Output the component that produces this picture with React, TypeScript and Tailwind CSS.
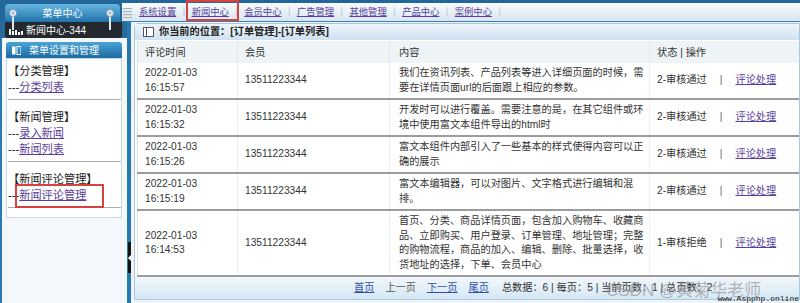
import React from "react";

const rows = [
  {
    date: "2022-01-03",
    time: "16:15:57",
    member: "13511223344",
    lines: ["我们在资讯列表、产品列表等进入详细页面的时候，需", "要在详情页面url的后面跟上相应的参数。"],
    status: "2-审核通过",
  },
  {
    date: "2022-01-03",
    time: "16:15:32",
    member: "13511223344",
    lines: ["开发时可以进行覆盖。需要注意的是，在其它组件或环", "境中使用富文本组件导出的html时"],
    status: "2-审核通过",
  },
  {
    date: "2022-01-03",
    time: "16:15:26",
    member: "13511223344",
    lines: ["富文本组件内部引入了一些基本的样式使得内容可以正", "确的展示"],
    status: "2-审核通过",
  },
  {
    date: "2022-01-03",
    time: "16:15:19",
    member: "13511223344",
    lines: ["富文本编辑器，可以对图片、文字格式进行编辑和混", "排。"],
    status: "2-审核通过",
  },
  {
    date: "2022-01-03",
    time: "16:14:53",
    member: "13511223344",
    lines: [
      "首页、分类、商品详情页面，包含加入购物车、收藏商",
      "品、立即购买、用户登录、订单管理、地址管理；完整",
      "的购物流程，商品的加入、编辑、删除、批量选择，收",
      "货地址的选择，下单、会员中心",
    ],
    status: "1-审核拒绝",
  },
];

const tabs = ["系统设置", "新闻中心", "会员中心", "广告管理", "其他管理", "产品中心", "案例中心"];

function Pin() {
  return (
    <svg width="8" height="22" viewBox="0 0 8 22">
      <rect x="3" y="6" width="2" height="16" fill="#dfeaf2" />
      <circle cx="4" cy="5" r="3.5" fill="#e8eef3" stroke="#7f98ab" strokeWidth="0.8" />
      <circle cx="4" cy="5" r="1.4" fill="#9fb3c2" />
    </svg>
  );
}

function Section({ title, links, first, boxed }: { title: string; links: string[]; first?: boolean; boxed?: string }) {
  return (
    <div className={`${first ? "pt-[4px]" : "pt-[9px]"} pb-[4px] border-b border-[#a9aeb2] leading-[16px] text-[11.2px] text-[#222]`}>
      <div>{title}</div>
      {links.map((l) => (
        <div key={l} className="relative">
          ---<a className="text-[#5b3f9c] underline">{l}</a>
          {boxed === l && (
            <div className="absolute left-[7px] top-[-3px] w-[89px] h-[24px] border-2 border-[#d6423e]" />
          )}
        </div>
      ))}
    </div>
  );
}

export default function App() {
  return (
    <div className="relative w-[800px] h-[303px] overflow-hidden flex flex-col bg-[#23669a] font-['Liberation_Sans','Noto_Sans_CJK_SC',sans-serif]">
      {/* 顶部 */}
      <div className="flex h-[22px]">
        <div className="w-[122px] pl-[5px] pt-[4px]">
          <div className="h-[18px] w-[115px] rounded-t-[4px] bg-gradient-to-b from-[#66b6e2] to-[#1f73aa] text-white text-[10px] flex items-center justify-center">
            菜单中心
          </div>
        </div>
        <div className="flex-1 mt-[3px] bg-gradient-to-b from-[#f8fbfd] to-[#d8e6f1] border-b border-[#3a80b3] flex items-center text-[9.3px]">
          <svg width="9" height="11" viewBox="0 0 9 11" className="ml-[1px] mr-[1.5px]">
            <rect x="0" y="1" width="9" height="1.2" fill="#a7b3bc" />
            <rect x="0" y="4" width="9" height="1.2" fill="#a7b3bc" />
            <rect x="0" y="7" width="9" height="1.2" fill="#a7b3bc" />
            <rect x="0" y="10" width="9" height="1" fill="#a7b3bc" />
          </svg>
          {tabs.map((t, i) => (
            <div key={t} className="flex items-center">
              <div className="relative px-[5.5px] leading-[14px]">
                <a className="text-[#5b3f9c] underline">{t}</a>
                {i === 1 && (
                  <div className="absolute left-[0px] top-[-5px] w-[53px] h-[21px] border-2 border-[#d6423e]" />
                )}
              </div>
              <span className="text-[#b8c4cc] px-[1px]">|</span>
            </div>
          ))}
        </div>
      </div>

      {/* 主体 */}
      <div className="flex h-[281px]">
        {/* 左侧菜单 */}
        <aside className="w-[127px] flex flex-col">
          <div className="bg-[#2a6b9b] px-[5px]">
            <div className="h-[16px] rounded-b-[3px] bg-[#23292e] flex items-center text-white text-[10px]">
              <svg width="14" height="9" viewBox="0 0 14 9" className="ml-[4px] mr-[3px]">
                <rect x="0" y="3" width="2" height="6" fill="#fff" />
                <rect x="3" y="5" width="2" height="4" fill="#fff" />
                <rect x="6" y="4" width="2" height="5" fill="#fff" />
                <rect x="9" y="6" width="2" height="3" fill="#fff" />
                <rect x="12" y="5" width="2" height="4" fill="#fff" />
              </svg>
              新闻中心-344
            </div>
          </div>
          <div className="flex-1 border-l-2 border-[#2a7ab2] bg-[#f4f8fb] pl-[4px] pr-[5px] pt-[4px]">
            <div className="h-[16px] rounded-t-[3px] bg-gradient-to-b from-[#4aa4d8] to-[#1b6aa1] flex items-center text-white text-[10px]">
              <svg width="9" height="9" viewBox="0 0 9 9" className="ml-[6px] mr-[8px]">
                <rect x="0" y="0.5" width="3.5" height="8" fill="#fff" />
                <rect x="5" y="0.5" width="4" height="8" fill="none" stroke="#fff" strokeWidth="1" />
              </svg>
              菜单设置和管理
            </div>
            <div className="bg-white border border-[#c5dae6] pl-[1px] pb-[9px]">
              <Section first title="【分类管理】" links={["分类列表"]} />
              <Section title="【新闻管理】" links={["录入新闻", "新闻列表"]} />
              <Section title="【新闻评论管理】" links={["新闻评论管理"]} boxed="新闻评论管理" />
            </div>
          </div>
        </aside>

        {/* 分隔条 */}
        <div className="relative w-[4px] bg-[#2878b0]">
          <div className="absolute left-[1px] top-[220px] w-[3px] h-[31px] bg-[#141414] flex items-center">
            <span className="block w-0 h-0 border-y-[3px] border-y-transparent border-r-[3px] border-r-white" />
          </div>
        </div>

        {/* 右侧内容 */}
        <main className="flex-1 bg-[#eef5fa] pl-[3px] pt-[1px] pb-[3px]">
          <div className="h-full border border-[#a9c8de] rounded-tl-[4px] bg-white flex flex-col">
            <div className="h-[17px] bg-gradient-to-b from-[#edf5fb] to-[#cfe2f1] flex items-center text-[10.2px] font-bold text-[#222]">
              <svg width="11" height="10" viewBox="0 0 11 10" className="ml-[8px] mr-[5px]">
                <rect x="0.5" y="0.5" width="10" height="9" fill="#fff" stroke="#556" strokeWidth="1" />
                <rect x="3" y="0.5" width="1" height="9" fill="#556" />
              </svg>
              你当前的位置：[订单管理]-[订单列表]
            </div>
            <div className="pl-[2px] pt-[1px] flex-1">
              <table className="w-full table-fixed border-collapse text-[10.2px] text-[#333]">
                <colgroup>
                  <col className="w-[100px]" />
                  <col className="w-[152px]" />
                  <col className="w-[260px]" />
                  <col />
                </colgroup>
                <thead>
                  <tr className="h-[22px] bg-[#eef3f6] text-left">
                    <th className="font-normal pl-[7px] border-l border-[#dde3e7]">评论时间</th>
                    <th className="font-normal pl-[7px] border-l border-[#e3e8eb]">会员</th>
                    <th className="font-normal pl-[9px] border-l border-[#e3e8eb]">内容</th>
                    <th className="font-normal pl-[7px] border-l border-[#e3e8eb]">状态 | 操作</th>
                  </tr>
                </thead>
                <tbody>
                  {rows.map((r) => (
                    <tr key={r.time} className="border-b-2 border-[#9a9c9e] leading-[14.5px]">
                      <td className="pl-[7px] py-[3px] border-l border-[#dde3e7]">
                        {r.date}
                        <br />
                        {r.time}
                      </td>
                      <td className="pl-[7px] border-l border-[#eceff1]">{r.member}</td>
                      <td className="pl-[9px] py-[3px] whitespace-nowrap border-l border-[#eceff1]">
                        {r.lines.map((l) => (
                          <div key={l}>{l}</div>
                        ))}
                      </td>
                      <td className="pl-[7px] border-l border-[#eceff1] whitespace-nowrap">
                        {r.status}
                        <span className="mx-[13px] text-[#666]">|</span>
                        <a className="text-[#5b3f9c] underline">评论处理</a>
                      </td>
                    </tr>
                  ))}
                </tbody>
              </table>
            </div>
            <div className="h-[23px] mt-auto bg-gradient-to-b from-[#f2f8fc] to-[#d5e7f4] flex items-center pl-[219px] gap-[11px] text-[10.2px] text-[#333] whitespace-nowrap">
              <a className="text-[#2f4fa6] underline">首页</a>
              <span className="text-[#555]">上一页</span>
              <a className="text-[#2f4fa6] underline">下一页</a>
              <a className="text-[#2f4fa6] underline">尾页</a>
              <span className="ml-[2px]">总数据：6 | 每页：5 | 当前页数：1 | 总页数：2</span>
            </div>
          </div>
        </main>
      </div>

      {/* 图钉 */}
      <div className="absolute left-[9px] top-[8px]">
        <Pin />
      </div>
      <div className="absolute left-[106px] top-[8px]">
        <Pin />
      </div>

      {/* 水印 */}
      <div className="absolute left-[606px] top-[281px] text-[17px] leading-[20px] text-[#8c8c8c]/60 pointer-events-none">
        CSDN @黄菊华老师
      </div>
      <div className="absolute right-[1px] top-[294px] text-[8px] leading-[9px] text-[#222] font-['Liberation_Mono',monospace] pointer-events-none">
        www.Aspphp.online
      </div>
    </div>
  );
}
